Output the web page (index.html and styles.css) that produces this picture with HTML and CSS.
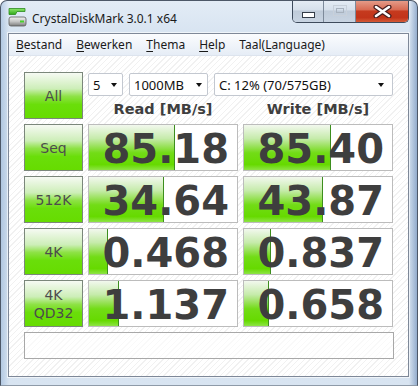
FILE: index.html
```html
<!DOCTYPE html>
<html lang="nl">
<head>
<meta charset="UTF-8" />
<title>CrystalDiskMark 3.0.1 x64</title>
<link rel="stylesheet" href="styles.css">
</head>
<body>
<div class="window">
  <!-- ------ TITLE BAR ------ -->
  <header class="titlebar">
    <svg class="app-icon" width="20" height="20" viewBox="0 0 20 20">
      <defs>
        <linearGradient id="tab" x1="0" y1="0" x2="0" y2="1">
          <stop offset="0" stop-color="#8ee86a"/>
          <stop offset="1" stop-color="#2fa81a"/>
        </linearGradient>
        <linearGradient id="disk" x1="0" y1="0" x2="0" y2="1">
          <stop offset="0" stop-color="#f2f2f2"/>
          <stop offset="0.5" stop-color="#c4c4c4"/>
          <stop offset="1" stop-color="#7c7c7c"/>
        </linearGradient>
      </defs>
      <path d="M1 0.5 H17 V3.5 H9 L7.5 6.5 H1 Z" fill="url(#tab)" stroke="#2c8a1e" stroke-width="0.8"/>
      <rect x="1" y="9" width="17" height="9" rx="2" fill="url(#disk)" stroke="#5c5c5c" stroke-width="0.8"/>
      <rect x="12" y="12.5" width="4" height="2" fill="#48d02c"/>
    </svg>
    <span class="title">CrystalDiskMark 3.0.1 x64</span>
    <div class="caption-btns">
      <span class="cbtn cbtn-min">
        <svg width="13" height="6" viewBox="0 0 13 6"><rect x="0.5" y="0.5" width="12" height="5" fill="#fff" stroke="#333c48"/></svg>
      </span>
      <span class="cbtn cbtn-max">
        <svg width="14" height="11" viewBox="0 0 14 11"><rect x="0.5" y="0.5" width="13" height="10" fill="none" stroke="#c8d0da"/><rect x="3.5" y="3.5" width="7" height="4" fill="none" stroke="#a8b2be"/></svg>
      </span>
      <span class="cbtn cbtn-close">
        <svg width="19" height="13" viewBox="0 0 19 13">
          <path d="M3 2 L16 11 M16 2 L3 11" stroke="#4a2020" stroke-width="5" stroke-linecap="round"/>
          <path d="M3 2 L16 11 M16 2 L3 11" stroke="#fff" stroke-width="2.6" stroke-linecap="round"/>
        </svg>
      </span>
    </div>
  </header>

  <div class="client">
    <!-- ------ MENU ------ -->
    <nav class="menubar">
      <span class="menu-item"><u>B</u>estand</span>
      <span class="menu-item"><u>B</u>ewerken</span>
      <span class="menu-item"><u>T</u>hema</span>
      <span class="menu-item"><u>H</u>elp</span>
      <span class="menu-item">Taal(<u>L</u>anguage)</span>
    </nav>

    <!-- ------ BENCHMARK PANEL ------ -->
    <main class="panel">
      <div class="bench">
        <div class="btn">All</div>
        <div class="setup">
          <div class="combos">
            <div class="combo combo-count">5</div>
            <div class="combo combo-size">1000MB</div>
            <div class="combo combo-drive">C: 12% (70/575GB)</div>
          </div>
          <div class="heads">
            <span class="head">Read [MB/s]</span>
            <span class="head">Write [MB/s]</span>
          </div>
        </div>

        <div class="btn">Seq</div>
        <div class="cell"><span class="bar" style="width:86px"></span><span class="num">85.18</span></div>
        <div class="cell"><span class="bar" style="width:87px"></span><span class="num">85.40</span></div>

        <div class="btn">512K</div>
        <div class="cell"><span class="bar" style="width:75px"></span><span class="num">34.64</span></div>
        <div class="cell"><span class="bar" style="width:79px"></span><span class="num">43.87</span></div>

        <div class="btn">4K</div>
        <div class="cell"><span class="bar" style="width:19px"></span><span class="num">0.468</span></div>
        <div class="cell"><span class="bar" style="width:27px"></span><span class="num">0.837</span></div>

        <div class="btn btn-two">4K<br>QD32</div>
        <div class="cell"><span class="bar" style="width:30px"></span><span class="num">1.137</span></div>
        <div class="cell"><span class="bar" style="width:25px"></span><span class="num">0.658</span></div>

        <div class="status"></div>
      </div>
    </main>
  </div>
</div>
</body>
</html>
```

FILE: styles.css
```css
/* ---------- Root ---------- */
:root {
  --ui-font: "Noto Sans", "Open Sans", sans-serif;
  --num-font: "DejaVu Sans", Verdana, sans-serif;
  --ink: #3e3e3e;
}

* { box-sizing: border-box; }

body {
  margin: 0;
  background: #fff;
  font-family: var(--ui-font);
}

/* ---------- Window frame ---------- */
.window {
  width: 418px;
  height: 386px;
  border: 1px solid #4d5868;
  border-bottom-color: #8e9aa8;
  border-radius: 7px 7px 0 0;
  background:
    linear-gradient(to right, rgba(150,180,215,0.55) 0, rgba(150,180,215,0) 8px, rgba(150,180,215,0) 408px, rgba(120,150,190,0.7) 416px),
    linear-gradient(to bottom, #e3ecf6 0, #d5e2f0 40px, #cddcec 200px, #d8e4f1 100%);
  display: flex;
  flex-direction: column;
  overflow: hidden;
}

.titlebar {
  flex: none;
  height: 32px;
  display: flex;
  align-items: flex-start;
  padding: 0 8px 0 7px;
}
.app-icon { margin-top: 7px; flex: none; }
.title {
  margin: 10px 0 0 4px;
  font-size: 12px;
  line-height: 16px;
  color: #1a1a1a;
}

/* ----- Caption buttons ----- */
.caption-btns {
  margin: -1px 0 0 auto;
  display: flex;
  height: 23px;
  border: 1px solid #3e4b5c;
  border-top: none;
  border-radius: 0 0 5px 5px;
  overflow: hidden;
}
.cbtn {
  display: flex;
  align-items: center;
  justify-content: center;
  height: 100%;
}
.cbtn-min, .cbtn-max {
  background: linear-gradient(#e6edf5 0, #d6e0eb 45%, #bfcbd9 50%, #c8d4e2 100%);
  border-right: 1px solid #7d8a9a;
}
.cbtn-min { width: 31px; padding-top: 7px; }
.cbtn-max { width: 32px; padding-bottom: 2px; }
.cbtn-close {
  width: 52px;
  background: linear-gradient(#e6a08e 0, #d86a52 45%, #c53a1e 50%, #c2341a 80%, #d45a36 100%);
}

/* ---------- Client area ---------- */
.client {
  flex: 1;
  min-height: 0;
  margin: 0 8px 8px 7px;
  border: 1px solid #7e8898;
  box-shadow: 0 0 0 1px rgba(255,255,255,0.6);
  display: flex;
  flex-direction: column;
}

.menubar {
  flex: none;
  height: 22px;
  display: flex;
  align-items: center;
  background: linear-gradient(#fbfcfe, #e6edf6);
  border-bottom: 1px solid #dde4ee;
  font-size: 12px;
  color: #1a1a1a;
}
.menu-item { padding: 0 7px; line-height: 16px; }
.menu-item u { text-underline-offset: 2px; }

.panel {
  flex: 1;
  padding: 16px 0 0 15px;
  background: repeating-linear-gradient(135deg, #fff 0 3px, #f1f1f1 3px 4px);
}

/* ----- Result grid ----- */
.bench {
  display: grid;
  grid-template-columns: 59px 150px 150px;
  grid-template-rows: repeat(5, 47px) auto;
  gap: 5px;
}

.btn {
  display: flex;
  align-items: center;
  justify-content: center;
  text-align: center;
  border: 1px solid #7b877b;
  background: linear-gradient(#f6faf3 0, #cdeeb8 35%, #8ee246 52%, #6ade0a 70%, #66dc00 100%);
  font-family: var(--num-font);
  font-size: 14px;
  color: #4c4c4c;
}
.btn-two { font-size: 14px; line-height: 18px; padding-top: 1px; }

.setup {
  grid-column: 2 / 4;
  display: flex;
  flex-direction: column;
}
.combos {
  display: flex;
  gap: 6px;
  margin-top: 1px;
}
.combo {
  height: 23px;
  display: flex;
  align-items: center;
  justify-content: space-between;
  padding: 0 5px 0 4px;
  border: 1px solid #c3c8d0;
  border-radius: 2px;
  background: #fff;
  font-size: 13px;
  color: #111;
}
.combo::after {
  content: "";
  border-left: 3.5px solid transparent;
  border-right: 3.5px solid transparent;
  border-top: 4px solid #111;
}
.combo-count { width: 35px; }
.combo-size { width: 79px; }
.combo-drive { width: 179px; padding-right: 8px; }

.heads {
  display: flex;
  gap: 5px;
  flex: 1;
}
.head {
  width: 150px;
  text-align: center;
  font-family: var(--num-font);
  font-weight: 700;
  font-size: 14.5px;
  line-height: 26px;
  color: var(--ink);
}

.cell {
  position: relative;
  border: 1px solid #bcbcbc;
  background: #fff;
  text-align: right;
  padding: 3px 8px 0 0;
  overflow: hidden;
}
.bar {
  position: absolute;
  left: 0;
  top: 0;
  bottom: 0;
  border-right: 1px solid #3d8e1e;
  background: linear-gradient(#f2f8ee 0, #c6ebab 30%, #92e04e 50%, #72dc16 62%, #66da00 88%, #8ee446 100%);
}
.num {
  position: relative;
  font-family: var(--num-font);
  font-weight: 700;
  font-size: 40px;
  line-height: 42px;
  color: var(--ink);
}

.status {
  grid-column: 1 / -1;
  height: 27px;
  width: 370px;
  border: 1px solid #a8a8a8;
  background: rgba(255,255,255,0.55);
}
```
